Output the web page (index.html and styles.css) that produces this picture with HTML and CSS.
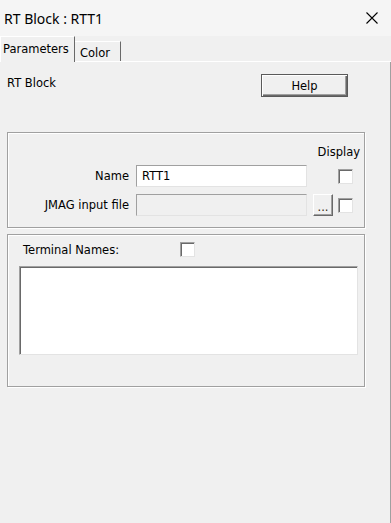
FILE: index.html
```html
<!DOCTYPE html>
<html lang="en">
<head>
  <meta charset="UTF-8" />
  <meta name="viewport" content="width=device-width, initial-scale=1.0"/>
  <title>RT Block : RTT1</title>
  <link rel="stylesheet" href="styles.css">
</head>
<body>
  <div class="titlebar">
    <span class="title">RT Block : RTT1</span>
    <svg class="close" width="12" height="12" viewBox="0 0 12 12">
      <path d="M0.5 0.5L11.5 11.5M11.5 0.5L0.5 11.5" stroke="#000" stroke-width="1.1" fill="none"/>
    </svg>
  </div>

  <div class="tabs">
    <div class="tab active">Parameters</div>
    <div class="tab">Color</div>
  </div>

  <div class="panel">
    <div class="head-row">
      <span class="block-label">RT Block</span>
      <button class="btn help">Help</button>
    </div>

    <div class="group props">
      <div class="display-head">Display</div>
      <div class="field-grid">
        <label class="field-label">Name</label>
        <div class="textbox">RTT1</div>
        <span></span>
        <span class="check"></span>

        <label class="field-label">JMAG input file</label>
        <div class="textbox disabled"></div>
        <button class="btn dots">...</button>
        <span class="check"></span>
      </div>
    </div>

    <div class="group terminals">
      <div class="term-head">
        <span>Terminal Names:</span>
        <span class="check"></span>
      </div>
      <div class="listbox"></div>
    </div>
  </div>
</body>
</html>
```

FILE: styles.css
```css
:root {
  --face: #f0f0f0;
  --shadow: #a0a0a0;
  --dark-shadow: #696969;
  --light: #e3e3e3;
  --highlight: #ffffff;
}

body {
  margin: 0;
  width: 391px;
  height: 523px;
  background-color: var(--face);
  font-family: 'DejaVu Sans', sans-serif;
  font-size: 11.5px;
  color: #000;
  overflow: hidden;
}

.titlebar {
  height: 36px;
  background-color: #f5f5f5;
  display: flex;
  align-items: center;
  justify-content: space-between;
  padding: 0 13px 0 4px;
}

.title {
  font-family: 'Noto Sans', sans-serif;
  font-size: 14px;
}

.close {
  display: block;
}

.tabs {
  height: 25px;
  display: flex;
  align-items: flex-end;
  border-bottom: 1px solid var(--highlight);
}

.tab {
  box-sizing: border-box;
  height: 20px;
  width: 46px;
  padding: 4px 0 0 5px;
  border-top: 1px solid var(--highlight);
  border-right: 1px solid var(--dark-shadow);
}

.tab.active {
  height: 26px;
  width: 75px;
  padding: 5px 0 0 2px;
  margin-bottom: -1px;
  border-left: 1px solid var(--highlight);
  background-color: var(--face);
}

.panel {
  box-sizing: border-box;
  height: 461px;
  padding: 0 25px 0 7px;
  border-right: 1px solid var(--shadow);
}

.head-row {
  display: flex;
  justify-content: space-between;
  align-items: flex-start;
  padding: 12px 17px 0 0;
  line-height: 14px;
}

.block-label {
  padding-top: 2px;
}

.btn {
  box-sizing: border-box;
  background-color: var(--face);
  font-family: inherit;
  font-size: inherit;
  color: #000;
  padding: 0;
  border: 1px solid;
  border-color: var(--highlight) var(--dark-shadow) var(--dark-shadow) var(--highlight);
  box-shadow: inset -1px -1px 0 var(--shadow);
}

.help {
  width: 87px;
  height: 23px;
  border: 1px solid #5a5a5a;
  box-shadow: inset 1px 1px 0 var(--highlight), inset -1px -1px 0 var(--dark-shadow), inset -2px -2px 0 var(--shadow);
}

.group {
  border: 1px solid var(--shadow);
  box-shadow: inset 1px 1px 0 var(--highlight), 1px 1px 0 var(--highlight);
}

.props {
  margin-top: 35px;
  padding: 12px 0 11px;
}

.display-head {
  text-align: right;
  padding-right: 4px;
  line-height: 14px;
  margin-bottom: 6px;
}

.field-grid {
  display: grid;
  grid-template-columns: 128px 171px 26px 20px;
  row-gap: 7px;
  align-items: center;
}

.field-label {
  text-align: right;
  padding-right: 7px;
}

.textbox {
  box-sizing: border-box;
  height: 22px;
  padding: 3px 0 0 5px;
  background-color: #fff;
  border: 1px solid;
  border-color: var(--shadow) var(--light) var(--light) var(--shadow);
}

.textbox.disabled {
  background-color: var(--face);
}

.dots {
  justify-self: end;
  width: 20px;
  height: 22px;
  padding-top: 3px;
  color: #3a2a10;
}

.check {
  justify-self: end;
  box-sizing: border-box;
  width: 15px;
  height: 15px;
  background-color: #fff;
  border: 1px solid;
  border-color: var(--shadow) var(--light) var(--light) var(--shadow);
  box-shadow: inset 1px 1px 0 var(--dark-shadow);
}

.terminals {
  margin-top: 6px;
  padding: 7px 6px 31px 11px;
}

.term-head {
  display: flex;
  align-items: center;
  height: 15px;
  padding-left: 4px;
}

.term-head span:first-child {
  width: 157px;
}

.listbox {
  box-sizing: border-box;
  margin-top: 9px;
  height: 89px;
  background-color: #fff;
  border: 1px solid;
  border-color: var(--shadow) var(--light) var(--light) var(--shadow);
  box-shadow: inset 1px 1px 0 var(--dark-shadow);
}
```
